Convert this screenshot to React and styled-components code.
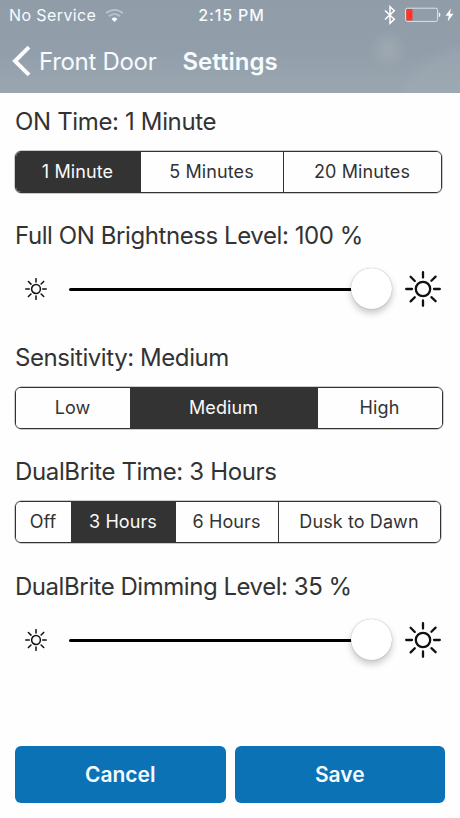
import {useState} from "react";
import styled, {createGlobalStyle} from "styled-components";

const GlobalStyle = createGlobalStyle`
  * {
    box-sizing: border-box;
  }

  body {
    margin: 0;
    background: #fefefe;
    font-family: Inter, "Liberation Sans", sans-serif;
    color: #333;
  }

  button {
    font-family: inherit;
    cursor: pointer;
  }
`;

const Screen = styled.div`
  display: flex;
  flex-direction: column;
  width: 460px;
  height: 818px;
  overflow: hidden;
`;

const Header = styled.header`
  height: 93px;
  color: #f7fbff;
  background:
    radial-gradient(circle at 388px 49px, rgba(175, 182, 183, 0.35) 4px, transparent 19px),
    radial-gradient(circle at 480px 135px, rgba(170, 181, 190, 0.2) 84px, transparent 96px),
    linear-gradient(180deg, #909da8 0%, #929fab 55%, #9aa6af 100%);
`;

const StatusBar = styled.div`
  display: grid;
  grid-template-columns: 1fr auto 1fr;
  align-items: center;
  height: 30px;
  padding: 0 6px 0 9px;
`;

const Carrier = styled.div`
  display: flex;
  align-items: center;
  gap: 9px;
  font-size: 16px;
  letter-spacing: 0.4px;
`;

const Clock = styled.div`
  font-size: 16px;
  font-weight: 500;
  letter-spacing: 0.85px;
`;

const StatusIcons = styled.div`
  display: flex;
  align-items: center;
  justify-content: flex-end;

  svg:nth-child(2) {
    margin: 0 4px 0 9px;
  }
`;

const NavBar = styled.nav`
  display: flex;
  align-items: center;
  height: 62px;
  padding-left: 12px;
`;

const BackButton = styled.button`
  display: flex;
  align-items: center;
  gap: 8px;
  padding: 0;
  border: none;
  background: none;
  color: inherit;
  font-size: 24px;
  letter-spacing: -0.3px;
`;

const Title = styled.h1`
  margin: 0 0 0 26px;
  font-size: 24px;
  font-weight: 600;
  letter-spacing: 0;
`;

const Content = styled.main`
  flex: 1;
  padding: 14px 15px 0;
`;

const Section = styled.section`
  margin-bottom: ${(props) => props.$after}px;
`;

const Label = styled.h2`
  margin: 0;
  height: 30px;
  font-size: 24px;
  font-weight: 400;
  line-height: 30px;
  white-space: nowrap;
  letter-spacing: ${(props) => props.$spacing}px;
`;

const Segments = styled.div`
  display: grid;
  grid-template-columns: ${(props) => props.$columns};
  width: ${(props) => props.$width}px;
  height: 42px;
  margin-top: 14px;
  border: 1px solid #333;
  border-radius: 6px;
  box-shadow: 0 0 0 0.5px rgba(51, 51, 51, 0.5);
  overflow: hidden;
`;

const Segment = styled.button`
  padding: 0 1px 1px 0;
  border: none;
  background: ${(props) => (props.$active ? "#333" : "#fefefe")};
  color: ${(props) => (props.$active ? "#fafafa" : "#333")};
  font-size: 18px;
  letter-spacing: 0.1px;
  white-space: nowrap;

  & + & {
    border-left: 1px solid #333;
  }
`;

const SliderRow = styled.div`
  display: grid;
  grid-template-columns: 44px 336px 36px;
  align-items: center;
  height: 42px;
  margin-top: 17px;
  padding-left: 10px;

  > svg {
    margin-bottom: 1px;
  }
`;

const Track = styled.div`
  display: flex;
  align-items: center;
  margin-right: 13px;
`;

const Line = styled.div`
  flex: 1;
  height: 3px;
  margin-right: -2px;
  border-radius: 2px 0 0 2px;
  background: #000;
`;

const Knob = styled.div`
  width: 41px;
  height: 41px;
  margin-bottom: 2px;
  border-radius: 50%;
  background: #fff;
  box-shadow: 0 0 1px rgba(0, 0, 0, 0.4), 0 4px 7px rgba(0, 0, 0, 0.22);
`;

const Footer = styled.footer`
  display: grid;
  grid-template-columns: 1fr 1fr;
  gap: 9px;
  padding: 0 15px 15px;
`;

const ActionButton = styled.button`
  height: 57px;
  padding: 0;
  border: none;
  border-radius: 6px;
  background: #0c72b6;
  color: #f5fbff;
  font-size: 21px;
  font-weight: 600;
`;

const WifiIcon = () => (
  <svg width='19' height='15' viewBox='0 0 19 15' fill='none'>
    <path d='M1.2 5.3a11.8 11.8 0 0 1 16.6 0' stroke='#b8c1c9' strokeWidth='2' />
    <path d='M4 8.3a7.8 7.8 0 0 1 11 0' stroke='#b8c1c9' strokeWidth='2' />
    <path d='M6.6 10.9a4.2 4.2 0 0 1 5.8 0L9.5 14z' fill='#fff' />
  </svg>
);

const BluetoothIcon = () => (
  <svg width='12' height='20' viewBox='0 0 12 20' fill='none' stroke='#fff' strokeWidth='1.5'>
    <path d='M1 5.5l9.3 8.7L6 18.3V1.7l4.3 4.1L1 14.5' />
  </svg>
);

const BatteryIcon = () => (
  <svg width='36' height='16' viewBox='0 0 36 16'>
    <rect x='0.6' y='1.2' width='32' height='13.2' rx='1.8' fill='none' stroke='#dce3e8' strokeWidth='1' />
    <rect x='1.3' y='2' width='6.2' height='11.6' rx='0.8' fill='#ff3527' />
    <path d='M33.8 5.5q1.6 0 1.6 2.3t-1.6 2.3z' fill='#eef3f6' />
  </svg>
);

const BoltIcon = () => (
  <svg width='9' height='14' viewBox='0 0 9 14'>
    <path d='M5.9 0.5L0.5 7.8h3.3L2.7 13.4 8.5 5.7H5z' fill='#fff' />
  </svg>
);

const BackIcon = () => (
  <svg width='19' height='32' viewBox='0 0 19 32' fill='none'>
    <path d='M17 2.2L3 16l14 13.8' stroke='#fbfdff' strokeWidth='4' />
  </svg>
);

const SunIcon = ({size, stroke}) => (
  <svg width={size} height={size} viewBox='0 0 36 36' fill='none' stroke='#111' strokeWidth={stroke} strokeLinecap='round'>
    <circle cx='18' cy='18' r='7.2' />
    <path d='M18 1.2v5.4M18 29.4v5.4M1.2 18h5.8M29 18h5.8M5.6 5.8l4.2 4.2M26.4 26.2l4.2 4M5.6 30.4l4.2-4.2M26.4 9.8l4.2-4.2' />
  </svg>
);

const SegmentedControl = ({options, initial, columns, width}) => {
  const [selected, setSelected] = useState(initial);

  return (
    <Segments $columns={columns} $width={width}>
      {options.map((option) => (
        <Segment key={option} $active={option === selected} onClick={() => setSelected(option)}>
          {option}
        </Segment>
      ))}
    </Segments>
  );
};

const BrightnessSlider = () => (
  <SliderRow>
    <SunIcon size={22} stroke={2.5} />
    <Track>
      <Line />
      <Knob />
    </Track>
    <SunIcon size={36} stroke={2.3} />
  </SliderRow>
);

const App = () => {
  return (
    <Screen>
      <GlobalStyle />
      <Header>
        <StatusBar>
          <Carrier>
            No Service
            <WifiIcon />
          </Carrier>
          <Clock>2:15 PM</Clock>
          <StatusIcons>
            <BluetoothIcon />
            <BatteryIcon />
            <BoltIcon />
          </StatusIcons>
        </StatusBar>
        <NavBar>
          <BackButton>
            <BackIcon />
            Front Door
          </BackButton>
          <Title>Settings</Title>
        </NavBar>
      </Header>

      <Content>
        <Section $after={28}>
          <Label $spacing={-0.35}>ON Time: 1 Minute</Label>
          <SegmentedControl
            options={["1 Minute", "5 Minutes", "20 Minutes"]}
            initial='1 Minute'
            columns='124px 143px 1fr'
            width={427}
          />
        </Section>
        <Section $after={33}>
          <Label $spacing={-0.42}>Full ON Brightness Level: 100 %</Label>
          <BrightnessSlider />
        </Section>
        <Section $after={28}>
          <Label $spacing={-0.42}>Sensitivity: Medium</Label>
          <SegmentedControl
            options={["Low", "Medium", "High"]}
            initial='Medium'
            columns='114px 187px 1fr'
            width={428}
          />
        </Section>
        <Section $after={29}>
          <Label $spacing={-0.36}>DualBrite Time: 3 Hours</Label>
          <SegmentedControl
            options={["Off", "3 Hours", "6 Hours", "Dusk to Dawn"]}
            initial='3 Hours'
            columns='55px 104px 103px 1fr'
            width={426}
          />
        </Section>
        <Section $after={0}>
          <Label $spacing={-0.46}>DualBrite Dimming Level: 35 %</Label>
          <BrightnessSlider />
        </Section>
      </Content>

      <Footer>
        <ActionButton>Cancel</ActionButton>
        <ActionButton>Save</ActionButton>
      </Footer>
    </Screen>
  );
};

export default App;
